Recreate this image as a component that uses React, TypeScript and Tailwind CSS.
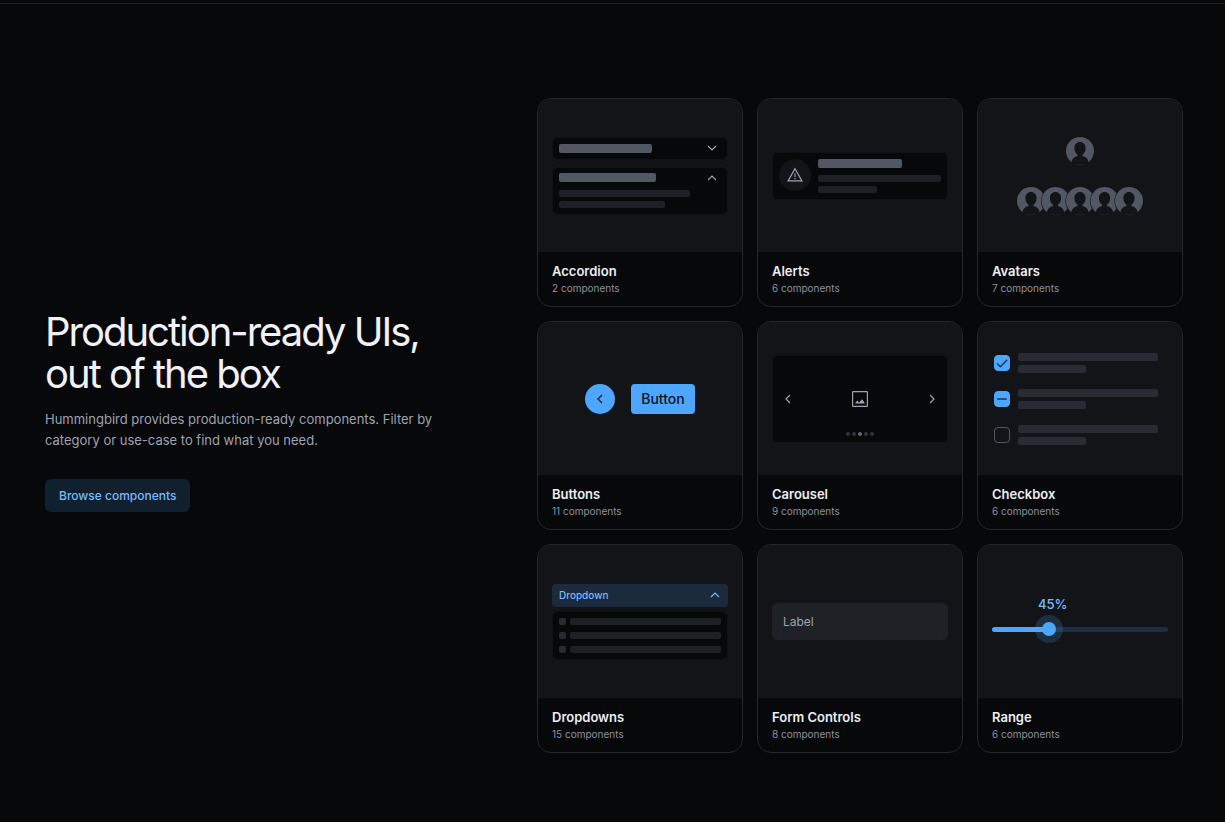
import React from 'react';

interface CardProps { title: string; count: number; children: React.ReactNode; }

function Card({ title, count, children }: CardProps) {
  return (
    <article className="overflow-hidden rounded-[14px] border border-[#25272d]">
      <div className="flex h-[153px] flex-col justify-center bg-[#121417] px-[14px]">{children}</div>
      <div className="px-[14px] pt-[11px] pb-[10px]">
        <h2 className="text-[13px] leading-[17px] font-semibold text-[#eceef4]">{title}</h2>
        <p className="text-[10px] leading-4 text-[#8d919e]">{count} components</p>
      </div>
    </article>
  );
}

const CHEVRONS = {
  down: 'M3 5 L7 9 L11 5',
  up: 'M3 9 L7 5 L11 9',
  left: 'M9 3 L5 7 L9 11',
  right: 'M5 3 L9 7 L5 11',
};

function Chevron({ dir }: { dir: keyof typeof CHEVRONS }) {
  return (
    <svg viewBox="0 0 14 14" className="size-[14px] shrink-0" fill="none" stroke="currentColor" strokeWidth="1.2" aria-hidden="true">
      <path d={CHEVRONS[dir]} />
    </svg>
  );
}

function AccordionPreview() {
  return (
    <div className="flex flex-col gap-[7px] text-[#9fa3b1]">
      <div className="flex items-center justify-between rounded-md border border-[#0f1114] bg-[#060809] py-[3px] pr-2 pl-[6px]">
        <div className="my-[3px] h-[9px] w-[93px] rounded-xs bg-[#525863]" />
        <Chevron dir="down" />
      </div>
      <div className="rounded-md border border-[#0f1114] bg-[#060809] py-[3px] pl-[6px]">
        <div className="flex items-center justify-between pr-2">
          <div className="h-[9px] w-[97px] rounded-xs bg-[#525863]" />
          <Chevron dir="up" />
        </div>
        <div className="mt-[5px] h-[7px] w-[131px] rounded-xs bg-[#1d2024]" />
        <div className="mt-1 mb-[3px] h-[7px] w-[106px] rounded-xs bg-[#1d2024]" />
      </div>
    </div>
  );
}

function AlertPreview() {
  return (
    <div className="flex gap-[7px] rounded-md border border-[#0f1114] bg-[#060809] p-[6px]">
      <div className="flex size-8 shrink-0 items-center justify-center rounded-full bg-[#121417] text-[#9fa3b1]">
        <svg viewBox="0 0 16 16" className="size-4" fill="none" stroke="currentColor" aria-hidden="true">
          <path d="M8 1.8 L15 13.9 H1 Z" strokeWidth="1.2" />
          <path d="M8 6.2 V10.2 M8 11 V12.3" strokeWidth="1.1" />
        </svg>
      </div>
      <div className="flex-1">
        <div className="h-[9px] w-[84px] rounded-xs bg-[#525863]" />
        <div className="mt-[7px] h-[7px] rounded-xs bg-[#1d2024]" />
        <div className="mt-1 h-[7px] w-[59px] rounded-xs bg-[#1d2024]" />
      </div>
    </div>
  );
}

function Avatar({ x = 0 }: { x?: number }) {
  return (
    <g transform={`translate(${x} 0)`}>
      <circle cx="15" cy="15" r="14.6" fill="#121417" />
      <circle cx="15" cy="15" r="14" fill="#525863" />
      <path
        d="M15 6 C18.2 6 20.6 8.4 20.6 12 C20.6 15 19.4 17.4 17.5 18.8 V19.9 C20.6 20.8 23 22.6 23.7 26 L22 29.5 H8 L6.3 26 C7 22.6 9.4 20.8 12.5 19.9 V18.8 C10.6 17.4 9.4 15 9.4 12 C9.4 8.4 11.8 6 15 6 Z"
        fill="#121417"
      />
      <path d="M10.5 28.3 A14 14 0 0 0 19.5 28.3" fill="none" stroke="#25282e" strokeWidth="0.7" />
    </g>
  );
}

function AvatarPreview() {
  return (
    <div className="flex flex-col items-center gap-5">
      <svg viewBox="0 0 30 30" className="h-[30px] w-[30px]" aria-hidden="true"><Avatar /></svg>
      <svg viewBox="0 0 128 30" className="h-[30px] w-[128px]" aria-hidden="true">
        {[0, 24.5, 49, 73.5, 98].map(x => <Avatar key={x} x={x} />)}
      </svg>
    </div>
  );
}

function ButtonPreview() {
  return (
    <div className="flex justify-center gap-4 text-[#07121f]">
      <button type="button" aria-label="Back" className="flex size-[30px] items-center justify-center rounded-full bg-[#4da6ff]">
        <Chevron dir="left" />
      </button>
      <button type="button" className="h-[30px] w-16 rounded-sm bg-[#4da6ff] text-sm font-medium">Button</button>
    </div>
  );
}

function CarouselPreview() {
  return (
    <div className="grid h-[88px] grid-rows-[1fr_auto_1fr] rounded-md border border-[#0f1114] bg-[#060809] px-2 text-[#9fa3b1]">
      <div className="row-start-2 flex items-center justify-between">
        <button type="button" aria-label="Previous" className="block"><Chevron dir="left" /></button>
        <svg viewBox="0 0 16 16" className="size-4" aria-hidden="true">
          <rect x="0.6" y="0.6" width="14.8" height="14.8" rx="0.6" fill="none" stroke="currentColor" strokeWidth="1.2" />
          <path d="M3 12.6 L5.2 9.6 L7 11.4 L10.2 8.2 L13 12.6 Z" fill="currentColor" />
        </svg>
        <button type="button" aria-label="Next" className="block"><Chevron dir="right" /></button>
      </div>
      <div className="row-start-3 flex items-end justify-center gap-[2px] pb-[6px]">
        <span className="size-1 rounded-full bg-[#30333b]" />
        <span className="size-1 rounded-full bg-[#30333b]" />
        <span className="size-1 rounded-full bg-[#626875]" />
        <span className="size-1 rounded-full bg-[#30333b]" />
        <span className="size-1 rounded-full bg-[#30333b]" />
      </div>
    </div>
  );
}

const CHECKS = [
  { label: 'Checked', mark: 'M3 8.4 L6.4 11.8 L13.2 4.8' },
  { label: 'Indeterminate', mark: 'M3.2 8 H12.8' },
  { label: 'Unchecked', mark: '' },
];

function CheckboxPreview() {
  return (
    <div className="flex flex-col gap-4 pl-[2px]">
      {CHECKS.map(({ label, mark }) => (
        <label key={label} className="flex items-center gap-2">
          <span className="relative size-4">
            <input
              type="checkbox"
              aria-label={label}
              defaultChecked={mark !== ''}
              className="block size-4 appearance-none rounded-sm border border-[#525863] checked:border-[#4da6ff] checked:bg-[#4da6ff]"
            />
            <svg viewBox="0 0 16 16" className="pointer-events-none absolute inset-0 size-4" fill="none" stroke="#143557" strokeWidth="1.4" aria-hidden="true">
              <path d={mark} />
            </svg>
          </span>
          <span className="flex flex-col gap-1">
            <span className="h-2 w-[140px] rounded-xs bg-[#282b32]" />
            <span className="h-2 w-[68px] rounded-xs bg-[#282b32]" />
          </span>
        </label>
      ))}
    </div>
  );
}

function DropdownPreview() {
  return (
    <div className="flex flex-col gap-1">
      <button type="button" aria-expanded="true" className="flex h-[23px] items-center justify-between rounded-sm bg-[#1b2a3d] pr-[6px] pl-[7px] text-[10px] font-medium text-[#78baff]">
        Dropdown
        <Chevron dir="up" />
      </button>
      <div className="flex flex-col gap-[7px] rounded-md border border-[#0f1114] bg-[#060809] p-[6px]">
        {[0, 1, 2].map(i => (
          <div key={i} className="flex gap-1">
            <div className="size-[7px] rounded-xs bg-[#282b32]" />
            <div className="h-[7px] flex-1 rounded-xs bg-[#1d2024]" />
          </div>
        ))}
      </div>
    </div>
  );
}

function FormPreview() {
  return (
    <input
      type="text"
      aria-label="Label"
      placeholder="Label"
      className="h-[37px] w-full rounded-md bg-[#1e2125] px-[11px] text-xs text-[#eceef4] placeholder:text-[#9fa3b1]"
    />
  );
}

function RangePreview() {
  return (
    <div className="flex flex-col gap-[3px] pb-1">
      <label htmlFor="range" className="pl-[46px] text-[13px] leading-4 font-medium text-[#78baff]">45%</label>
      <div className="flex h-7 items-center">
        <input
          id="range"
          type="range"
          defaultValue={31}
          aria-valuetext="45%"
          className="h-[5px] w-full appearance-none rounded-full bg-linear-to-r from-[#4da6ff] from-32% to-[#1c2e42] to-32% [&::-webkit-slider-thumb]:size-[14px] [&::-webkit-slider-thumb]:appearance-none [&::-webkit-slider-thumb]:rounded-full [&::-webkit-slider-thumb]:bg-[#4da6ff] [&::-webkit-slider-thumb]:shadow-[0_0_0_7px_#4da6ff2e]"
        />
      </div>
    </div>
  );
}

export default function App() {
  return (
    <main className="min-h-screen bg-[#060809] pt-[3px] font-[Inter,sans-serif]">
      <section className="grid grid-cols-[492fr_646fr] items-center border-t border-[#1d2024] pt-[94px] pr-[42px] pb-[66px] pl-[45px]">
        <div className="pb-7">
          <h1 className="text-[40px] leading-[42px] tracking-tighter text-[#f1f2f9]">
            Production-ready UIs,<br />out of the box
          </h1>
          <p className="mt-[14px] max-w-[410px] text-[13px] leading-[21px] text-[#9fa3b1]">
            Hummingbird provides production-ready components. Filter by category or use-case to find what you need.
          </p>
          <a href="#components" className="mt-7 inline-flex h-[33px] items-center rounded-md bg-[#10202f] px-[14px] text-xs font-medium text-[#78baff]">
            Browse components
          </a>
        </div>
        <div id="components" className="grid grid-cols-3 gap-[14px]">
          <Card title="Accordion" count={2}><AccordionPreview /></Card>
          <Card title="Alerts" count={6}><AlertPreview /></Card>
          <Card title="Avatars" count={7}><AvatarPreview /></Card>
          <Card title="Buttons" count={11}><ButtonPreview /></Card>
          <Card title="Carousel" count={9}><CarouselPreview /></Card>
          <Card title="Checkbox" count={6}><CheckboxPreview /></Card>
          <Card title="Dropdowns" count={15}><DropdownPreview /></Card>
          <Card title="Form Controls" count={8}><FormPreview /></Card>
          <Card title="Range" count={6}><RangePreview /></Card>
        </div>
      </section>
    </main>
  );
}
